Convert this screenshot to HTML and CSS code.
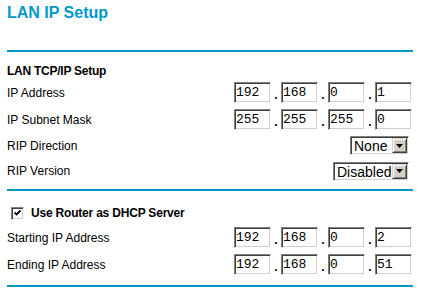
FILE: index.html
```html
<!DOCTYPE html>
<html lang="en">
<head>
    <meta charset="UTF-8">
    <title>LAN IP Setup</title>
    <link rel="stylesheet" href="styles.css">
</head>
<body>
    <div class="page">
        <h1 class="title">LAN IP Setup</h1>
        <div class="rule"></div>

        <div class="section-head">LAN TCP/IP Setup</div>
        <div class="row">
            <span class="label">IP Address</span>
            <span class="ip">
                <input class="octet" type="text" value="192"><span class="sep">.</span><input class="octet" type="text" value="168"><span class="sep">.</span><input class="octet" type="text" value="0"><span class="sep">.</span><input class="octet" type="text" value="1">
            </span>
        </div>
        <div class="row">
            <span class="label">IP Subnet Mask</span>
            <span class="ip">
                <input class="octet" type="text" value="255"><span class="sep">.</span><input class="octet" type="text" value="255"><span class="sep">.</span><input class="octet" type="text" value="255"><span class="sep">.</span><input class="octet" type="text" value="0">
            </span>
        </div>
        <div class="row row-select">
            <span class="label">RIP Direction</span>
            <span class="combo combo-none">
                <span class="combo-val">None</span>
                <span class="combo-btn"><svg width="7" height="4" viewBox="0 0 7 4"><path d="M0 0h7L3.5 4z" fill="#000"/></svg></span>
            </span>
        </div>
        <div class="row row-select2">
            <span class="label">RIP Version</span>
            <span class="combo combo-disabled">
                <span class="combo-val">Disabled</span>
                <span class="combo-btn"><svg width="7" height="4" viewBox="0 0 7 4"><path d="M0 0h7L3.5 4z" fill="#000"/></svg></span>
            </span>
        </div>
        <div class="rule rule-mid"></div>

        <div class="check-row">
            <span class="checkbox"><svg width="9" height="9" viewBox="0 0 9 9"><path d="M1.5 3.5l2 2 4-4" fill="none" stroke="#000" stroke-width="1.8"/></svg></span>
            <span class="check-label">Use Router as DHCP Server</span>
        </div>
        <div class="row">
            <span class="label">Starting IP Address</span>
            <span class="ip">
                <input class="octet" type="text" value="192"><span class="sep">.</span><input class="octet" type="text" value="168"><span class="sep">.</span><input class="octet" type="text" value="0"><span class="sep">.</span><input class="octet" type="text" value="2">
            </span>
        </div>
        <div class="row">
            <span class="label">Ending IP Address</span>
            <span class="ip">
                <input class="octet" type="text" value="192"><span class="sep">.</span><input class="octet" type="text" value="168"><span class="sep">.</span><input class="octet" type="text" value="0"><span class="sep">.</span><input class="octet" type="text" value="51">
            </span>
        </div>
        <div class="rule rule-end"></div>
    </div>
</body>
</html>
```

FILE: styles.css
```css
body {
    margin: 0;
    font-family: "Liberation Sans", Arial, sans-serif;
    font-size: 12px;
    color: #000;
    background-color: #fff;
}
.page {
    width: 406px;
    margin-left: 7px;
}
.title {
    margin: 0;
    padding-top: 4px;
    height: 46px;
    font-size: 16px;
    line-height: 18px;
    font-weight: bold;
    color: #0099cc;
}
.rule {
    height: 2px;
    background-color: #0099cc;
}
.rule-mid {
    margin-top: 5px;
}
.rule-end {
    margin-top: 7px;
}
.section-head {
    padding: 12px 0 1px;
    line-height: 14px;
    font-weight: bold;
    letter-spacing: -0.25px;
}
.row {
    display: flex;
    align-items: center;
    justify-content: space-between;
    height: 27px;
    padding-right: 1px;
}
.row-select {
    height: 25px;
}
.row-select2 {
    height: 26px;
}
.label {
    line-height: 14px;
}
.ip {
    display: flex;
    height: 21px;
}
.octet {
    box-sizing: border-box;
    width: 37px;
    height: 21px;
    margin: 0;
    padding: 0 0 0 1px;
    border: 1px solid;
    border-color: #808080 #fff #fff #808080;
    box-shadow: inset 1px 1px 0 #404040, inset -1px -1px 0 #d4d0c8;
    font-family: "Liberation Mono", "Courier New", monospace;
    font-size: 13px;
    color: #000;
    background: #fff;
    outline: none;
}
.sep {
    display: flex;
    align-items: flex-end;
    justify-content: center;
    width: 10px;
    padding-bottom: 1px;
    line-height: 14px;
    font-weight: bold;
}
.combo {
    box-sizing: border-box;
    display: flex;
    height: 19px;
    margin-right: 3px;
    padding: 1px;
    border: 1px solid;
    border-color: #808080 #fff #fff #808080;
    box-shadow: inset 1px 1px 0 #404040, inset -1px -1px 0 #d4d0c8;
    font-size: 14px;
}
.combo-none {
    width: 59px;
}
.combo-disabled {
    width: 76px;
}
.combo-val {
    flex: 1;
    padding: 1px 0 0 2px;
    line-height: 14px;
}
.combo-btn {
    box-sizing: border-box;
    display: flex;
    align-items: center;
    justify-content: center;
    width: 15px;
    background-color: #d4d0c8;
    border: 1px solid;
    border-color: #d4d0c8 #404040 #404040 #d4d0c8;
    box-shadow: inset 1px 1px 0 #fff, inset -1px -1px 0 #808080;
}
.check-row {
    display: flex;
    align-items: center;
    height: 22px;
    padding: 11px 0 0 4px;
}
.checkbox {
    box-sizing: border-box;
    display: flex;
    align-items: center;
    justify-content: center;
    width: 13px;
    height: 13px;
    margin-right: 7px;
    border: 1px solid;
    border-color: #808080 #fff #fff #808080;
    box-shadow: inset 1px 1px 0 #404040, inset -1px -1px 0 #d4d0c8;
}
.check-label {
    font-weight: bold;
    letter-spacing: -0.2px;
}
```
